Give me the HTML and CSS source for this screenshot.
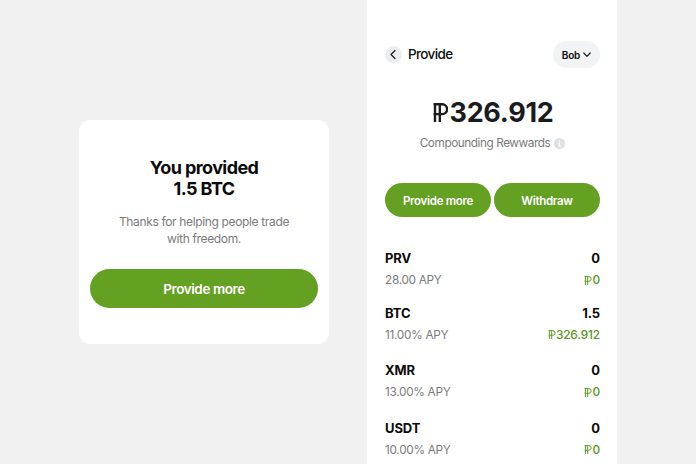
FILE: index.html
```
<!DOCTYPE html>
<html lang="en">
<head>
    <meta charset="UTF-8">
    <meta name="viewport" content="width=device-width, initial-scale=1.0">
    <title>Provide</title>
    <link rel="stylesheet" href="styles.css">
</head>
<body>
    <!-- PRV coin mark -->
    <svg class="defs" width="0" height="0">
        <symbol id="prv" viewBox="0 0 15 19">
            <path d="M0.5 1.3H9.2A4.4 4.4 0 0 1 9.2 11.1H0.5M2 0.2V19M6.8 0.2V19"/>
        </symbol>
    </svg>

    <div class="card">
        <h2>You provided<br>1.5 BTC</h2>
        <p>Thanks for helping people trade<br>with freedom.</p>
        <button class="button button-large">Provide more</button>
    </div>

    <div class="screen">
        <div class="header">
            <button class="back">
                <svg width="17" height="17" viewBox="0 0 17 17"><path d="M10 4.5 L6 8.5 L10 12.5"/></svg>
            </button>
            <h1>Provide</h1>
            <button class="account">
                <span>Bob</span>
                <svg width="8" height="6" viewBox="0 0 8 6"><path d="M0.8 1 L4 4.3 L7.2 1"/></svg>
            </button>
        </div>

        <div class="balance"><svg class="prv"><use href="#prv"/></svg>326.912</div>
        <div class="caption">
            <span>Compounding Rewwards</span>
            <svg width="11" height="11" viewBox="0 0 11 11">
                <circle cx="5.5" cy="5.5" r="5.5"/>
                <path d="M5.5 2.2v1.4M4.4 5h1.2v3M4.2 8.2h2.8"/>
            </svg>
        </div>

        <div class="actions">
            <button class="button">Provide more</button>
            <button class="button">Withdraw</button>
        </div>

        <div class="coins">
            <div class="coin">
                <div class="line"><span>PRV</span><span>0</span></div>
                <div class="line sub"><span>28.00 APY</span><span class="reward"><svg class="prv"><use href="#prv"/></svg>0</span></div>
            </div>
            <div class="coin">
                <div class="line"><span>BTC</span><span>1.5</span></div>
                <div class="line sub"><span>11.00% APY</span><span class="reward"><svg class="prv"><use href="#prv"/></svg>326.912</span></div>
            </div>
            <div class="coin">
                <div class="line"><span>XMR</span><span>0</span></div>
                <div class="line sub"><span>13.00% APY</span><span class="reward"><svg class="prv"><use href="#prv"/></svg>0</span></div>
            </div>
            <div class="coin">
                <div class="line"><span>USDT</span><span>0</span></div>
                <div class="line sub"><span>10.00% APY</span><span class="reward"><svg class="prv"><use href="#prv"/></svg>0</span></div>
            </div>
        </div>
    </div>
</body>
</html>
```

FILE: styles.css
```
* {
    box-sizing: border-box;
}
body {
    margin: 0;
    height: 464px;
    display: flex;
    align-items: flex-start;
    gap: 38px;
    padding-left: 79px;
    overflow: hidden;
    background: #f1f1f1;
    color: #0b0b0b;
    font-family: Inter, "Liberation Sans", sans-serif;
}
h1, h2, p {
    margin: 0;
}
button {
    border: none;
    padding: 0;
    font-family: inherit;
    color: inherit;
}
svg {
    display: block;
    fill: none;
}
.defs {
    position: absolute;
}
.card {
    width: 250px;
    height: 224px;
    margin-top: 120px;
    padding: 37px 11px 0;
    border-radius: 11px;
    background: #fff;
    text-align: center;
}
.card h2 {
    font-size: 18px;
    font-weight: 700;
    line-height: 21px;
    letter-spacing: -0.6px;
}
.card p {
    margin: 15px 0 22px;
    font-size: 12px;
    line-height: 16.5px;
    letter-spacing: -0.35px;
    color: #7b7b7d;
}
.button {
    flex: 1;
    height: 34px;
    padding-top: 1px;
    border-radius: 17px;
    background: #64a022;
    color: #fff;
    font-size: 11.5px;
    font-weight: 600;
    letter-spacing: -0.3px;
}
.button-large {
    width: 228px;
    height: 39px;
    border-radius: 20px;
    font-size: 13.5px;
    letter-spacing: -0.4px;
}
.screen {
    width: 250px;
    height: 464px;
    padding: 41px 17px 0 18px;
    background: #fff;
}
.header {
    display: flex;
    align-items: center;
    height: 27px;
}
.header h1 {
    flex: 1;
    margin-left: 6px;
    padding-bottom: 1px;
    font-size: 13.5px;
    font-weight: 500;
    letter-spacing: -0.65px;
}
.back {
    width: 17px;
    height: 17px;
    border-radius: 50%;
    background: #ebedee;
}
.back path, .account path {
    stroke: #1a1b1d;
    stroke-width: 1.2;
    stroke-linecap: round;
    stroke-linejoin: round;
}
.account {
    display: flex;
    align-items: center;
    justify-content: center;
    gap: 3px;
    width: 47px;
    height: 27px;
    border-radius: 14px;
    background: #f2f3f5;
    font-size: 10px;
    font-weight: 600;
    letter-spacing: -0.2px;
}
.balance {
    display: flex;
    align-items: center;
    justify-content: center;
    margin-top: 27px;
    height: 34px;
    padding-left: 1px;
    font-size: 27px;
    font-weight: 700;
    letter-spacing: -0.3px;
    color: #1a1b1d;
}
.prv {
    width: 15px;
    height: 19px;
    margin-right: 2px;
    stroke: currentColor;
    stroke-width: 2.4;
}
.caption {
    display: flex;
    align-items: center;
    justify-content: center;
    gap: 4px;
    margin-top: 6px;
    height: 16px;
    font-size: 11.8px;
    letter-spacing: -0.45px;
    color: #7b7b7d;
}
.caption circle {
    fill: #dfe0e2;
}
.caption path {
    stroke: #fff;
    stroke-width: 1.2;
}
.actions {
    display: flex;
    gap: 3px;
    margin-top: 32px;
}
.coins {
    display: flex;
    flex-direction: column;
    gap: 19.4px;
    margin-top: 33px;
}
.coin {
    height: 38px;
}
.coin:first-child {
    height: 35.5px;
}
.line {
    display: flex;
    justify-content: space-between;
    height: 16px;
    line-height: 16px;
    font-size: 13px;
    font-weight: 700;
    letter-spacing: -0.1px;
}
.sub {
    margin-top: 6px;
    font-size: 11.8px;
    font-weight: 400;
    letter-spacing: -0.3px;
    color: #7b7b7d;
}
.reward {
    display: flex;
    align-items: center;
    color: #569718;
    font-weight: 500;
    letter-spacing: -0.1px;
}
.reward .prv {
    width: 8px;
    height: 9px;
    margin-right: 0;
}
.reward .prv use {
    stroke-width: 2;
}
```
